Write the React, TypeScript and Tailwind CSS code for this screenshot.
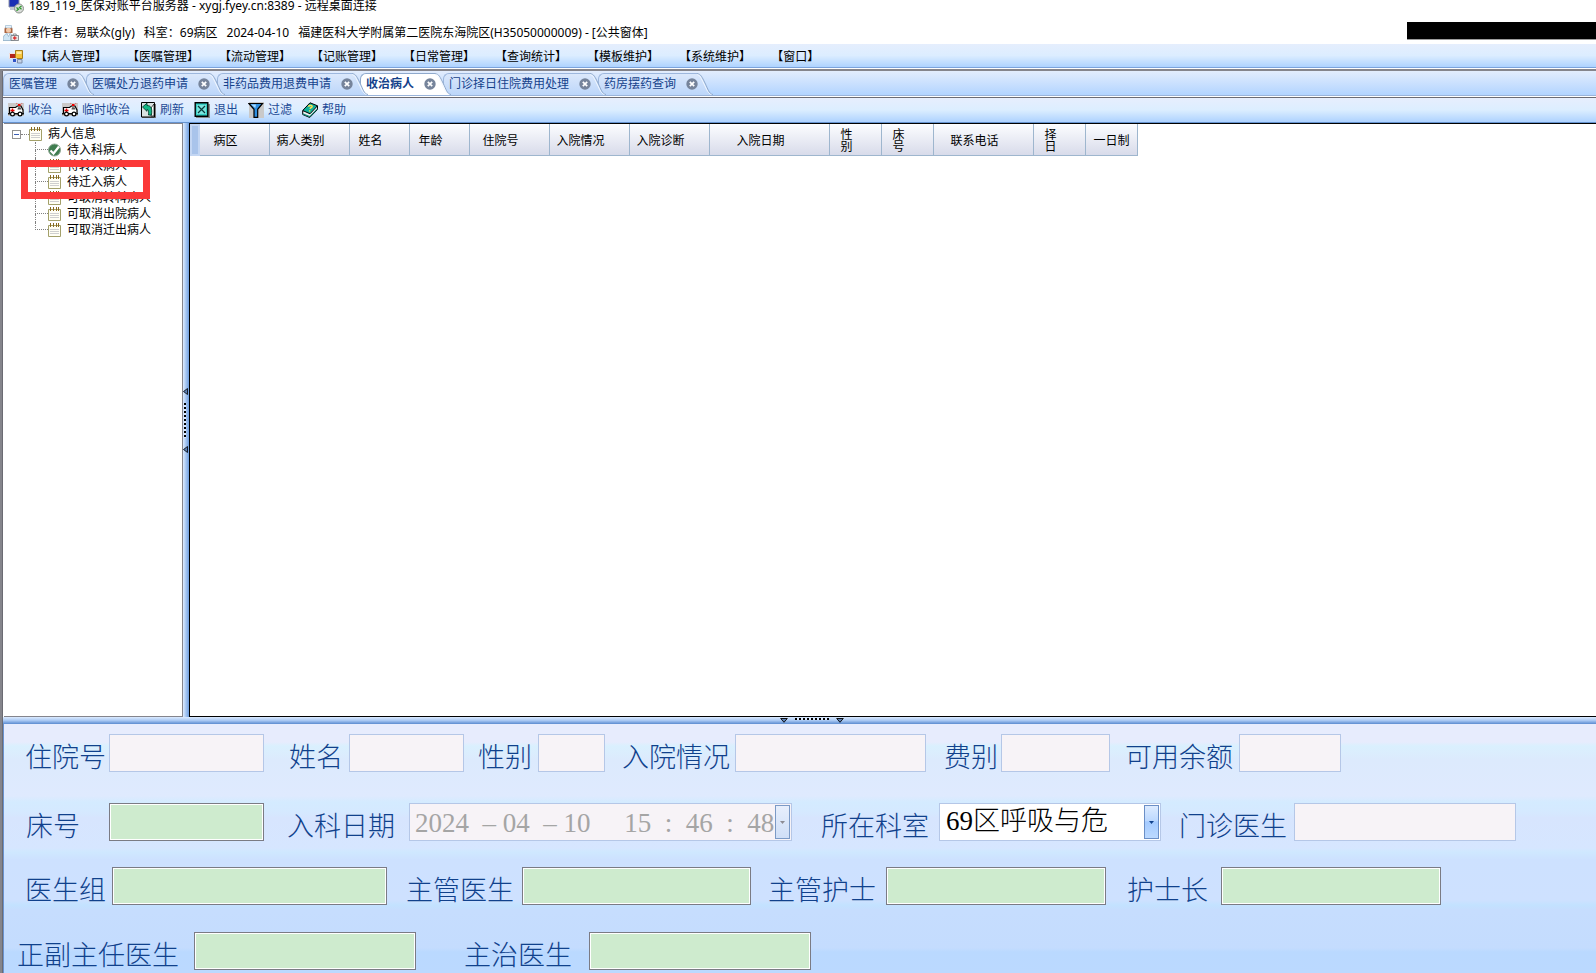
import { ReactNode } from "react"

const menus = [
  "【病人管理】",
  "【医嘱管理】",
  "【流动管理】",
  "【记账管理】",
  "【日常管理】",
  "【查询统计】",
  "【模板维护】",
  "【系统维护】",
  "【窗口】",
]

const tabs = [
  { title: "医嘱管理" },
  { title: "医嘱处方退药申请" },
  { title: "非药品费用退费申请" },
  { title: "收治病人", active: true },
  { title: "门诊择日住院费用处理" },
  { title: "药房摆药查询" },
]

const columns = [
  { title: "病区", width: 70 },
  { title: "病人类别", width: 80 },
  { title: "姓名", width: 60 },
  { title: "年龄", width: 60 },
  { title: "住院号", width: 80 },
  { title: "入院情况", width: 80 },
  { title: "入院诊断", width: 80 },
  { title: "入院日期", width: 120 },
  { title: "性\n别", width: 52 },
  { title: "床\n号", width: 52 },
  { title: "联系电话", width: 100 },
  { title: "择\n日", width: 52 },
  { title: "一日制", width: 52, full: true },
]

const treeItems = [
  { title: "待入科病人", checked: true },
  { title: "待转入病人" },
  { title: "待迁入病人" },
  { title: "可取消转科病人" },
  { title: "可取消出院病人" },
  { title: "可取消迁出病人" },
]

const RemoteIcon = () => (
  <svg className="h-4 w-4 shrink-0 self-end" viewBox="0 0 16 16">
    <path d="M1 0h10v9H1z" fill="#1b2fb5" stroke="#8b93a8" />
    <path d="M2 10h8v2H2z" fill="#c4c9d4" />
    <circle cx="11" cy="10.500" r="4.500" fill="#d9dcd9" stroke="#8c928c" />
    <path d="M8.500 9.600l2 1.600-2 1.600M13.500 8l-2 1.600 2 1.600" fill="none" stroke="#2f9a2f" strokeWidth="1.300" />
  </svg>
)

const NurseIcon = () => (
  <svg className="h-4 w-4 shrink-0" viewBox="0 0 16 16">
    <path d="M1.500 4c0-4 8-4 8 0v4h-8z" fill="#a8633f" />
    <path d="M2.500.5h6v2.500h-6z" fill="#e9f2fa" stroke="#8fb0c9" strokeWidth=".6" />
    <circle cx="5.500" cy="5.200" r="2.500" fill="#f3c9a8" />
    <path d="M0 15.500c0-5 2-7 5.500-7s5 2 5 7z" fill="#cfe6f5" stroke="#7fa3bd" strokeWidth=".7" />
    <path d="M4 8.500l1.500 3 1.500-3" fill="#fff" stroke="#7fa3bd" strokeWidth=".6" />
    <path d="M8 10.500h7.500v5H8z" fill="#e6e6e6" stroke="#6f7479" strokeWidth=".8" />
    <path d="M10.200 10.500V9h3v1.500" fill="none" stroke="#6f7479" strokeWidth=".8" />
    <path d="M11.700 11.200v3.600M10 13h3.500" stroke="#d33" strokeWidth="1.300" />
  </svg>
)

const FormIcon = () => (
  <svg className="h-[14px] w-[14px] shrink-0" viewBox="0 0 14 14">
    <path d="M.5 3.500h6v5h-6z" fill="#b3261a" stroke="#f4e3df" />
    <path d="M6.500.5h7v8h-7z" fill="#f7c53a" stroke="#a87d17" />
    <path d="M7.500 1.500h5v2.500h-5z" fill="#fde9a4" />
    <path d="M8.500 9.500h4.500v3.500H8.500z" fill="#c7d3e6" stroke="#7d8da8" />
    <path d="M3.500 8.500h4v4h-4z" fill="#2f55c8" stroke="#d5def4" />
  </svg>
)

const AmbulanceIcon = () => (
  <svg className="h-4 w-4 shrink-0" viewBox="0 0 16 16">
    <path d="M0 1h16v13H0z" fill="#cbc9c9" />
    <path d="M1.500 5.500h6L9.500 4h3.500l2 4v3.500H1.500z" fill="#fff" stroke="#000" strokeWidth="1.200" />
    <path d="M10 5.200h2.500l1 2.300H9.500z" fill="#555" />
    <path d="M4.500 6.500v4M2.500 8.500h4" stroke="#e00000" strokeWidth="1.400" />
    <path d="M10 2h2.500v2H10zM8.500.8l1 1h-1zM13.500.8l1 1h-1z" fill="#f00000" />
    <path d="M0 11h16v1.500H0z" fill="#111" />
    <circle cx="4.500" cy="12" r="1.900" fill="#fff" stroke="#000" strokeWidth="1.200" />
    <circle cx="12" cy="12" r="1.900" fill="#fff" stroke="#000" strokeWidth="1.200" />
  </svg>
)

const RefreshIcon = () => (
  <svg className="h-4 w-4 shrink-0" viewBox="0 0 16 16">
    <path d="M2 2h14v14H2z" fill="#777" />
    <path d="M1.500.5h13v14.500h-13z" fill="#d9e2e2" stroke="#000" />
    <path d="M11 6l3-4v12h-3z" fill="#fff" stroke="#000" strokeWidth=".7" />
    <path d="M2.500 5L7 1.200v2.300c4 0 5.500 3 4.500 9.500H8.500c.3-4-.2-5.500-1.500-5.500v1.800z" fill="#12b886" stroke="#013d2c" strokeWidth=".9" />
  </svg>
)

const ExitIcon = () => (
  <svg className="h-4 w-4 shrink-0" viewBox="0 0 16 16">
    <path d="M2 2h14v14H2z" fill="#8a8a8a" />
    <path d="M1.200.7h12.600v13.600H1.200z" fill="#35cfc4" stroke="#000" strokeWidth="1.400" />
    <path d="M3 3h9v9H3z" fill="#7be5de" />
    <path d="M4 4l7 7M11 4l-7 7" stroke="#0a3b3b" strokeWidth="1.200" />
  </svg>
)

const FilterIcon = () => (
  <svg className="h-4 w-4 shrink-0" viewBox="0 0 16 16">
    <path d="M1 0h15v16H1z" fill="#c9c9c9" />
    <path d="M.9 1.500h13.600L9.700 7.300v8H6v-8z" fill="#2f8fe0" stroke="#000" strokeWidth="1.200" />
    <path d="M3 2.500h5L7.300 6z" fill="#a9dbff" />
  </svg>
)

const HelpIcon = () => (
  <svg className="h-4 w-4 shrink-0" viewBox="0 0 16 16">
    <path d="M.7 9v3.500l7 3 7.800-8V4z" fill="#f2f2f2" stroke="#000" />
    <path d="M.7 8.500L8 .8l7.500 3L8 11.800z" fill="#0fb09c" stroke="#000" />
    <path d="M.9 12.500l6.800 2.800 7.600-7.800v-1.300L7.700 14 .9 11.200z" fill="#0b8577" />
    <path d="M6.300 4.600c1-1.700 4.200-1.300 3.800.2-.3 1-1.900.9-2.200 1.900M7.600 8.200v1.200" fill="none" stroke="#ffe14d" strokeWidth="1.400" />
  </svg>
)

const NoteIcon = () => (
  <svg className="h-[14px] w-[13px] shrink-0" viewBox="0 0 13 14">
    <path d="M.5 2.500h12v11H.5z" fill="#fffef4" stroke="#a3a06a" />
    <path d="M2 6.500h9M2 8.500h9M2 10.500h9" stroke="#cfcfcf" />
    <path d="M2.500 0v4M5.500 0v4M8.500 0v4M10.500 0v4" stroke="#8a6a1f" />
  </svg>
)

const CheckIcon = () => (
  <svg className="h-[14px] w-[13px] shrink-0" viewBox="0 0 13 14">
    <circle cx="6.500" cy="7" r="6" fill="#3f7d4f" stroke="#8ea894" />
    <path d="M2.500 7.500l3 3L11 3.500" fill="none" stroke="#fff" strokeWidth="2.200" />
  </svg>
)

const tools: { title: string; icon: ReactNode }[] = [
  { title: "收治", icon: <AmbulanceIcon /> },
  { title: "临时收治", icon: <AmbulanceIcon /> },
  { title: "刷新", icon: <RefreshIcon /> },
  { title: "退出", icon: <ExitIcon /> },
  { title: "过滤", icon: <FilterIcon /> },
  { title: "帮助", icon: <HelpIcon /> },
]

const Tab = ({ title, active }: { title: string; active?: boolean }) => (
  <div className="relative h-[22px]">
    <div
      className={`absolute inset-y-0 left-0 right-2 rounded-tl-md border-l border-t ${
        active ? "border-[#8fa9cc] bg-white" : "border-[#9db7dd] bg-gradient-to-b from-[#dbe8fb] to-[#bcd6fa]"
      }`}
    />
    {/* slanted edge that runs over the next tab */}
    <svg className="absolute -right-2 top-0 z-10 h-[22px] w-4" viewBox="0 0 16 22">
      <defs>
        <linearGradient id={`slope-${title}`} x1="0" y1="0" x2="0" y2="1">
          <stop offset="0" stopColor={active ? "#ffffff" : "#dbe8fb"} />
          <stop offset="1" stopColor={active ? "#ffffff" : "#bcd6fa"} />
        </linearGradient>
      </defs>
      <path d="M0 0C4 1 5 4 8 10S12 21 16 22H0z" fill={`url(#slope-${title})`} />
      <path d="M0 1.500C3 2 4 5 7 11S11 21 15 21.500" fill="none" stroke="#f3f8ff" />
      <path d="M0 .5C4 1 5 4 8 10S12 21 16 21.500" fill="none" stroke="#8fa9cc" />
    </svg>
    <div className="relative z-20 flex h-[21px] items-center gap-[10px] pl-[6px] pr-[7px]">
      <button className={`whitespace-nowrap ${active ? "font-bold" : ""}`}>{title}</button>
      <button aria-label={`关闭${title}`}>
        <svg className="h-3 w-3" viewBox="0 0 12 12">
          <circle cx="6" cy="6" r="5.700" fill="#76849b" />
          <path d="M3.800 3.800l4.400 4.400M8.200 3.800l-4.400 4.400" stroke="#fff" strokeWidth="1.700" />
        </svg>
      </button>
    </div>
  </div>
)

const boxStyles = {
  plain: "border border-[#b5c7e7] bg-[#f7f3f7]",
  green: "border border-[#7b7b84] bg-[#ceebce] shadow-[inset_0_0_0_1px_#ffffff]",
}

const FieldLabel = ({ id, children }: { id: string; children: ReactNode }) => (
  <label htmlFor={id} className="mt-[10px] shrink-0 whitespace-nowrap leading-7">
    {children}
  </label>
)

const Field = ({
  id,
  label,
  className,
  kind = "plain",
  inputClass,
}: {
  id: string
  label: string
  className?: string
  kind?: "plain" | "green"
  inputClass: string
}) => (
  <div className={`flex items-center ${className ?? ""}`}>
    <FieldLabel id={id}>{label}</FieldLabel>
    <input id={id} readOnly={kind === "plain"} className={`h-[38px] shrink-0 px-1 outline-none ${boxStyles[kind]} ${inputClass}`} />
  </div>
)

const DropArrow = ({ color }: { color: string }) => (
  <svg className="h-[5px] w-[5px]" viewBox="0 0 5 5">
    <path d="M0 1h5L2.500 4z" fill={color} />
  </svg>
)

const SplitLeft = () => (
  <svg className="h-[7px] w-[5px]" viewBox="0 0 5 7">
    <path d="M4.500 .5v6L.5 3.500z" fill="#5c7fb5" stroke="#000" strokeWidth=".8" />
  </svg>
)

const SplitDown = () => (
  <svg className="h-[5px] w-2" viewBox="0 0 8 5">
    <path d="M.7 .5h6.600L4 4.300z" fill="#5c7fb5" stroke="#000" strokeWidth=".9" />
  </svg>
)

const App = () => {
  return (
    <div className="flex min-h-screen flex-col overflow-hidden bg-white font-['Noto_Sans','Noto_Sans_CJK_SC',sans-serif] text-[12px] leading-4 text-black">
      <header>
        <div className="flex h-[14px] items-start gap-[5px] overflow-hidden pl-2">
          <RemoteIcon />
          <span className="whitespace-nowrap leading-3">189_119_医保对账平台服务器 - xygj.fyey.cn:8389 - 远程桌面连接</span>
        </div>
        <div className="flex h-[30px] items-center gap-2 pl-[3px] pt-2">
          <NurseIcon />
          <h1 className="flex gap-[9px] whitespace-nowrap">
            <span>操作者：易联众(gly)</span>
            <span>科室：69病区</span>
            <span>2024-04-10</span>
            <span>福建医科大学附属第二医院东海院区(H35050000009) - [公共窗体]</span>
          </h1>
          <div className="ml-auto h-[18px] w-[189px] self-start border-b border-[#9c9c9c] bg-black" />
        </div>
        <nav className="flex h-6 items-center border-b border-[#7ba3dc] bg-gradient-to-b from-[#e5eefd] via-[#dcedff] to-[#aed3ff] pl-[9px] pt-[2px]">
          <FormIcon />
          <div className="flex gap-5 pl-3">
            {menus.map((m) => (
              <button key={m} className="whitespace-nowrap">
                {m}
              </button>
            ))}
          </div>
        </nav>
      </header>

      <div className="mt-px flex flex-1 flex-col border-l-2 border-t-2 border-[#85858c]">
        <div className="flex flex-1 flex-col border-l border-[#6b6b73]">
          <div className="h-[27px] border-b border-[#6b6b73] bg-gradient-to-b from-[#e3edfd] to-[#aed2ff] text-[#15428b]">
            <div className="flex h-full flex-col justify-end border-b border-white">
              <div className="flex border-b border-[#9ab4da]">
                {tabs.map((t) => (
                  <Tab key={t.title} title={t.title} active={t.active} />
                ))}
              </div>
            </div>
          </div>

          <div className="flex h-[25px] items-center gap-[10px] border-b border-[#6593cf] bg-gradient-to-b from-[#e7eefd] via-[#dceeff] to-[#aed2ff] pl-[5px] text-[#1e4a96]">
            {tools.map((t) => (
              <button key={t.title} className="flex items-center gap-1 whitespace-nowrap">
                {t.icon}
                {t.title}
              </button>
            ))}
          </div>

          <main className="flex min-h-[400px] flex-1 pl-px">
            <aside className="relative w-[179px] shrink-0 border-b border-r border-t border-[#84848c] bg-white pl-2 pt-[2px]">
              <div className="flex h-4 items-center">
                <button
                  aria-label="折叠"
                  className="flex h-[9px] w-[9px] items-center justify-center border border-[#919191] bg-white">
                  <span className="h-px w-[5px] bg-[#3c5fb5]" />
                </button>
                <span className="w-[8px] border-t border-dotted border-[#808080]" />
                <NoteIcon />
                <span className="ml-[6px]">病人信息</span>
              </div>
              <ul className="pl-[23px]">
                {treeItems.map((item, i) => (
                  <li key={item.title} className="flex h-4 items-center">
                    <span className="flex h-4 w-[13px] shrink-0 flex-col">
                      <span className="h-2 border-b border-l border-dotted border-[#808080]" />
                      {i < treeItems.length - 1 && <span className="h-2 border-l border-dotted border-[#808080]" />}
                    </span>
                    {item.checked ? <CheckIcon /> : <NoteIcon />}
                    <span className="ml-[6px] whitespace-nowrap">{item.title}</span>
                  </li>
                ))}
              </ul>
              {/* highlight drawn over the tree */}
              <div className="absolute left-[17px] top-9 h-[39px] w-[129px] border-[7px] border-[#fb3838]" />
            </aside>

            <div className="flex w-[6px] shrink-0 flex-col items-start justify-center gap-[8px] bg-gradient-to-r from-[#dcebff] to-[#6f9fe0]">
              <SplitLeft />
              <span className="ml-px h-[35px] w-[2px] bg-[repeating-linear-gradient(to_bottom,#000_0px,#000_2px,#dbe9ff_2px,#dbe9ff_4px)]" />
              <SplitLeft />
            </div>

            <section className="flex-1 border-b border-l border-t border-black bg-white">
              <table className="w-[948px] table-fixed border-separate border-spacing-0">
                <colgroup>
                  <col style={{ width: 10 }} />
                  {columns.map((c) => (
                    <col key={c.title} style={{ width: c.width }} />
                  ))}
                </colgroup>
                <thead>
                  <tr>
                    <th className="h-8 border-2 border-[#c3d6f3] bg-[#a9c4eb] p-0" />
                    {columns.map((c) => (
                      <th
                        key={c.title}
                        className={`h-8 whitespace-pre border-b border-r border-[#9eb6ce] bg-gradient-to-b from-[#fcfdff] to-[#d8dbea] p-0 pt-[2px] text-center font-normal leading-3 ${
                          c.full ? "" : "pr-[18px]"
                        }`}>
                        {c.title}
                      </th>
                    ))}
                  </tr>
                </thead>
              </table>
            </section>
          </main>

          <div className="flex h-[7px] items-start justify-center gap-[7px] bg-gradient-to-b from-[#dcebff] via-[#a9c8f3] to-[#5b8bd0] pl-6 pt-px">
            <SplitDown />
            <span className="h-[2px] w-[34px] bg-[repeating-linear-gradient(to_right,#000_0px,#000_2px,#dbe9ff_2px,#dbe9ff_4px)]" />
            <SplitDown />
          </div>

          <form className="flex flex-col border-l border-[#6a93d0] bg-[linear-gradient(to_bottom,#e7ecfd_0px,#e7ecfd_18px,#daf0fe_22px,#dceafd_36px,#dfeafe_72px,#d4ebff_78px,#d5e9ff_88px,#d7e5fe_94px,#d6e6ff_124px,#cfe8ff_128px,#cde1ff_136px,#cee1ff_176px,#c3e2ff_181px,#c6ddfe_186px,#c4dcfe_224px,#bad9ff_228px,#bbd9ff_249px)] pb-[3px] pt-[10px] font-['Liberation_Serif','Noto_Sans_CJK_SC',serif] text-[27px] font-light text-[#10418c]">
            <div className="flex pl-[21px]">
              <Field id="zyh" label="住院号" inputClass="ml-[3px] w-[155px]" />
              <Field id="xm" label="姓名" className="ml-[25px]" inputClass="ml-[6px] w-[115px]" />
              <Field id="xb" label="性别" className="ml-[14px]" inputClass="ml-[6px] w-[67px]" />
              <Field id="ryqk" label="入院情况" className="ml-[17px]" inputClass="ml-[5px] w-[191px]" />
              <Field id="fb" label="费别" className="ml-[18px]" inputClass="ml-[3px] w-[109px]" />
              <Field id="kyye" label="可用余额" className="ml-[15px]" inputClass="ml-[6px] w-[102px]" />
            </div>

            <div className="mt-[31px] flex pl-[22px]">
              <Field id="ch" label="床号" kind="green" inputClass="ml-[29px] w-[155px]" />
              <div className="ml-[23px] flex items-center">
                <FieldLabel id="rkrq">入科日期</FieldLabel>
                <div className="ml-[14px] flex h-[38px] w-[383px] items-center border border-[#b5c7e7] bg-[#f7f3f7] pr-px">
                  <input
                    id="rkrq"
                    disabled
                    defaultValue="2024  – 04  – 10     15  :  46  :  48"
                    className="w-0 flex-1 pl-[5px] pt-[2px] text-[#a5a5a5]"
                  />
                  <button
                    type="button"
                    disabled
                    aria-label="选择日期"
                    className="flex h-[34px] w-[15px] shrink-0 items-center justify-center border border-[#7b9ac6] bg-gradient-to-b from-[#e7effc] to-[#cfdff7]">
                    <DropArrow color="#8c8c94" />
                  </button>
                </div>
              </div>
              <div className="ml-[29px] flex items-center">
                <FieldLabel id="szks">所在科室</FieldLabel>
                <div className="relative ml-[10px] h-[38px] w-[222px] border border-[#b5c7e7] bg-white text-black">
                  <select id="szks" className="h-[34px] w-full appearance-none pl-[6px] leading-[30px] outline-none">
                    <option>69区呼吸与危</option>
                  </select>
                  <span className="pointer-events-none absolute right-px top-px flex h-[34px] w-[15px] items-center justify-center border border-[#6b8fc6] bg-[linear-gradient(to_bottom,#dcebff_0%,#bdd9ff_45%,#a5cbff_50%,#bbd9ff_100%)]">
                    <DropArrow color="#10418c" />
                  </span>
                </div>
              </div>
              <Field id="mzys" label="门诊医生" className="ml-[18px]" inputClass="ml-[7px] w-[222px]" />
            </div>

            <div className="mt-[26px] flex pl-[21px]">
              <Field id="ysz" label="医生组" kind="green" inputClass="ml-[6px] w-[275px]" />
              <Field id="zgys" label="主管医生" kind="green" className="ml-[19px]" inputClass="ml-[8px] w-[229px]" />
              <Field id="zghs" label="主管护士" kind="green" className="ml-[17px]" inputClass="ml-[10px] w-[220px]" />
              <Field id="hsz" label="护士长" kind="green" className="ml-[21px]" inputClass="ml-[13px] w-[220px]" />
            </div>

            <div className="mt-[27px] flex pl-[13px]">
              <Field id="zfzr" label="正副主任医生" kind="green" inputClass="ml-[15px] w-[222px]" />
              <Field id="zzys" label="主治医生" kind="green" className="ml-[48px]" inputClass="ml-[17px] w-[222px]" />
            </div>
          </form>
        </div>
      </div>
    </div>
  )
}

export default App
